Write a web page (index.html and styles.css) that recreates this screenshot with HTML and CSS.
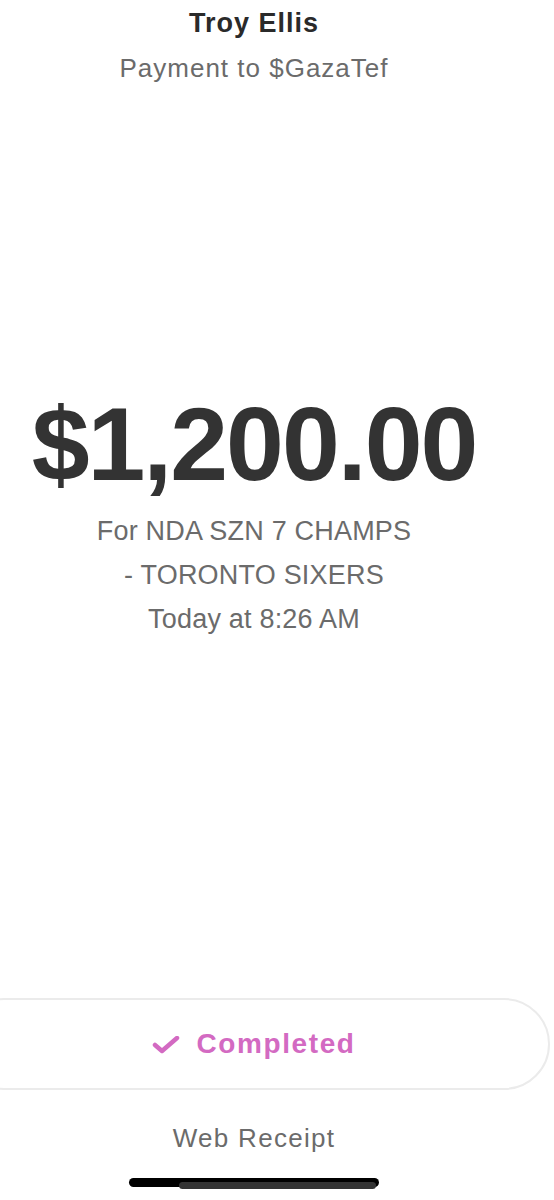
FILE: index.html
```html
<!DOCTYPE html>
<html lang="en">
<head>
  <meta charset="UTF-8">
  <meta name="viewport" content="width=device-width, initial-scale=1.0">
  <title>Payment to $GazaTef</title>
  <link rel="stylesheet" href="styles.css">
</head>
<body>
<div class="screen">
  <div class="header">
    <h1 class="name">Troy Ellis</h1>
    <p class="subtitle">Payment to $GazaTef</p>
  </div>

  <div class="amount">$1,200.00</div>

  <div class="memo">
    <p>For NDA SZN 7 CHAMPS</p>
    <p>- TORONTO SIXERS</p>
    <p>Today at 8:26 AM</p>
  </div>

  <div class="status">
    <svg class="check" width="28" height="18" viewBox="0 0 28 18">
      <polyline points="3,9 10,15 25,2" fill="none" stroke="#d36ac2" stroke-width="4.5" stroke-linecap="round" stroke-linejoin="round"/>
    </svg>
    <span>Completed</span>
  </div>

  <a class="receipt" href="#">Web Receipt</a>

  <div class="home-bar"></div>
</div>
</body>
</html>
```

FILE: styles.css
```css
body {
  margin: 0;
  background-color: #fff;
  font-family: "Liberation Sans", Arial, sans-serif;
  overflow: hidden;
}
.screen {
  width: 508px;
  height: 1200px;
  display: flex;
  flex-direction: column;
  align-items: center;
  text-align: center;
}
.header {
  padding-top: 7px;
}
.name {
  margin: 0;
  font-size: 27px;
  line-height: 32px;
  font-weight: bold;
  color: #2a2a2a;
  letter-spacing: 1px;
}
.subtitle {
  margin: 13px 0 0;
  font-size: 26px;
  line-height: 32px;
  color: #6b6b6b;
  letter-spacing: 1px;
}
.amount {
  margin-top: 305px;
  font-size: 104px;
  line-height: 110px;
  font-weight: bold;
  color: #333;
  letter-spacing: -2px;
}
.memo {
  margin-top: 10px;
}
.memo p {
  margin: 0;
  font-size: 27px;
  line-height: 44px;
  color: #6b6b6b;
  letter-spacing: 0.2px;
}
.status {
  box-sizing: border-box;
  align-self: flex-start;
  margin-top: 357px;
  margin-left: -42px;
  width: 592px;
  height: 92px;
  border: 2px solid #ebebeb;
  border-radius: 46px;
  display: flex;
  align-items: center;
  justify-content: center;
  gap: 16px;
  color: #d36ac2;
  font-size: 28px;
  line-height: 32px;
  font-weight: bold;
  letter-spacing: 1.6px;
}
.check {
  margin-top: 2px;
}
.receipt {
  margin-top: 32px;
  font-size: 26px;
  line-height: 32px;
  color: #6b6b6b;
  text-decoration: none;
  letter-spacing: 1.3px;
}
.home-bar {
  position: relative;
  margin-top: 24px;
  width: 250px;
  height: 9px;
  border-radius: 5px;
  background-color: #000;
}
.home-bar::after {
  content: "";
  position: absolute;
  left: 50px;
  right: 3px;
  top: 4px;
  height: 7px;
  border-radius: 4px;
  background-color: #333;
}
```
